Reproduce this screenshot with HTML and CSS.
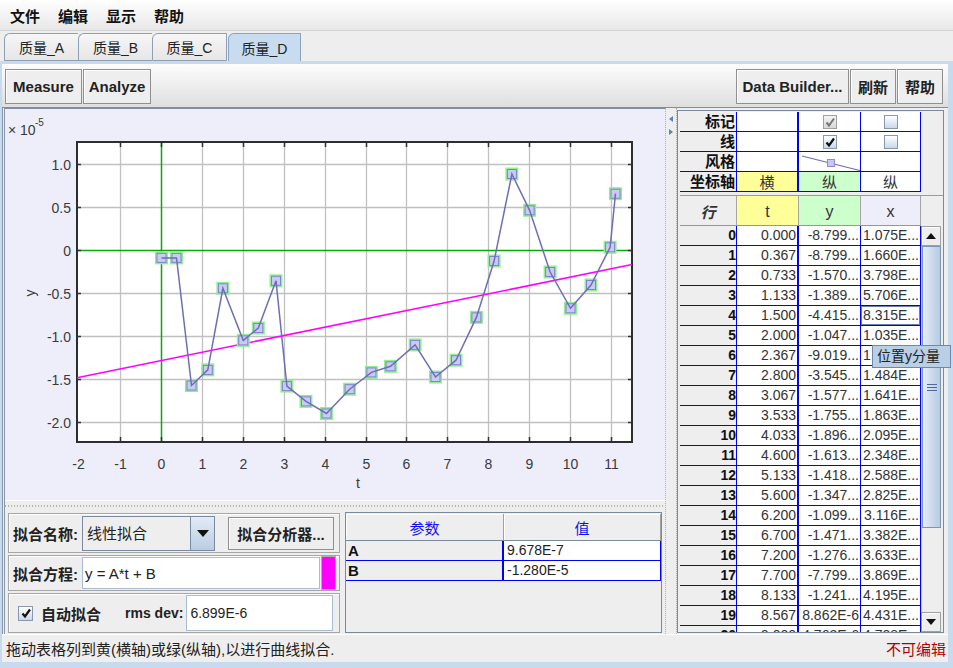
FILE: index.html
```html
<!DOCTYPE html>
<html>
<head>
<meta charset="utf-8">
<link rel="stylesheet" href="styles.css">
</head>
<body>
<div class="menubar"><span>文件</span><span>编辑</span><span>显示</span><span>帮助</span></div>
<div class="tabstrip">
  <div class="tab">质量_A</div>
  <div class="tab">质量_B</div>
  <div class="tab wide">质量_C</div>
  <div class="tab sel">质量_D</div>
</div>
<div class="frame">
  <div class="inner">
    <div class="toolbar">
      <button class="btn w-measure">Measure</button>
      <button class="btn w-analyze">Analyze</button>
      <div class="spacer"></div>
      <button class="btn w-builder">Data Builder...</button>
      <button class="btn w-small">刷新</button>
      <button class="btn w-small">帮助</button>
    </div>
    <div class="main">
      <div class="leftcol">
        <div class="chart">
          <svg class="plot" width="660" height="391" viewBox="0 0 660 391">
            <defs>
              <g id="mk">
                <rect x="-6.5" y="-6.5" width="13" height="13" fill="#8fef8f"/>
                <rect x="-4.5" y="-4.5" width="9" height="9" fill="#cacaf6" stroke="#8282d2" stroke-width="1"/>
              </g>
            </defs>
            <rect x="72" y="33" width="555" height="300" fill="#ffffff"/>
            <path d="M115.5 33V333M197.5 33V333M238.5 33V333M279.5 33V333M320.5 33V333M361.5 33V333M401.5 33V333M442.5 33V333M483.5 33V333M524.5 33V333M565.5 33V333M606.5 33V333M72 55.5H627M72 98.5H627M72 184.5H627M72 227.5H627M72 270.5H627M72 313.5H627" stroke="#c0c0c0" stroke-width="1.3" fill="none"/>
            <path d="M156.5 33V333M72 141.5H627" stroke="#0aa80a" stroke-width="1.5" fill="none"/>
            <path d="M115.5 333v-5M156.5 333v-5M197.5 333v-5M238.5 333v-5M279.5 333v-5M320.5 333v-5M361.5 333v-5M401.5 333v-5M442.5 333v-5M483.5 333v-5M524.5 333v-5M565.5 333v-5M606.5 333v-5M115.5 33v5M156.5 33v5M197.5 33v5M238.5 33v5M279.5 33v5M320.5 33v5M361.5 33v5M401.5 33v5M442.5 33v5M483.5 33v5M524.5 33v5M565.5 33v5M606.5 33v5M72 55.5h4M72 98.5h4M72 141.5h4M72 184.5h4M72 227.5h4M72 270.5h4M72 313.5h4M627 55.5h-4M627 98.5h-4M627 141.5h-4M627 184.5h-4M627 227.5h-4M627 270.5h-4M627 313.5h-4" stroke="#333" stroke-width="1.5" fill="none"/>
            <rect x="72" y="33" width="555" height="300" fill="none" stroke="#2d2d2d" stroke-width="2"/>
            <line x1="72" y1="268.7" x2="627" y2="155.6" stroke="#ff00ff" stroke-width="1.5"/>
            <use href="#mk" x="156.5" y="148.9"/><use href="#mk" x="171.5" y="148.9"/><use href="#mk" x="186.5" y="276.5"/><use href="#mk" x="202.8" y="260.9"/><use href="#mk" x="217.9" y="179.3"/><use href="#mk" x="238.3" y="231.4"/><use href="#mk" x="253.3" y="219"/><use href="#mk" x="271" y="171.8"/><use href="#mk" x="281.9" y="277.1"/><use href="#mk" x="301" y="292.4"/><use href="#mk" x="321.5" y="304.5"/><use href="#mk" x="344.6" y="280.2"/><use href="#mk" x="366.4" y="263.4"/><use href="#mk" x="385.5" y="257.3"/><use href="#mk" x="410.1" y="235.9"/><use href="#mk" x="430.5" y="268"/><use href="#mk" x="451" y="251.2"/><use href="#mk" x="471.4" y="208.4"/><use href="#mk" x="489.1" y="152"/><use href="#mk" x="506.9" y="65"/><use href="#mk" x="524.6" y="101.3"/><use href="#mk" x="545.1" y="163"/><use href="#mk" x="565.5" y="199.3"/><use href="#mk" x="586" y="176"/><use href="#mk" x="605.1" y="138.3"/><use href="#mk" x="610.5" y="84.7"/>
            <polyline points="156.5,148.9 171.5,148.9 186.5,276.5 202.8,260.9 217.9,179.3 238.3,231.4 253.3,219 271,171.8 281.9,277.1 301,292.4 321.5,304.5 344.6,280.2 366.4,263.4 385.5,257.3 410.1,235.9 430.5,268 451,251.2 471.4,208.4 489.1,152 506.9,65 524.6,101.3 545.1,163 565.5,199.3 586,176 605.1,138.3 610.5,84.7" fill="none" stroke="#6e6eb4" stroke-width="1.5"/>
            <g class="ylab">
              <text x="66" y="61">1.0</text><text x="66" y="104">0.5</text><text x="66" y="147">0</text><text x="66" y="190">-0.5</text><text x="66" y="233">-1.0</text><text x="66" y="276">-1.5</text><text x="66" y="319">-2.0</text>
            </g>
            <g class="xlab">
              <text x="73.5" y="360">-2</text><text x="115.5" y="360">-1</text><text x="156.5" y="360">0</text><text x="197.5" y="360">1</text><text x="238.5" y="360">2</text><text x="279.5" y="360">3</text><text x="320.5" y="360">4</text><text x="361.5" y="360">5</text><text x="401.5" y="360">6</text><text x="442.5" y="360">7</text><text x="483.5" y="360">8</text><text x="524.5" y="360">9</text><text x="565.5" y="360">10</text><text x="606.5" y="360">11</text>
            </g>
            <text class="axname" x="351" y="379">t</text>
            <text class="axname" x="0" y="0" transform="translate(30 184) rotate(-90)" text-anchor="middle">y</text>
            <text class="axname" x="3" y="26">×</text>
            <text class="axname" x="15" y="26">10</text>
            <text class="sup" x="30" y="17">-5</text>
          </svg>
        </div>
        <div class="hsplit"></div>
        <div class="bottom">
          <div class="fitpanel">
            <div class="fitrow r1">
              <span class="lbl">拟合名称:</span>
              <div class="combo"><div class="combo-field">线性拟合</div><div class="combo-btn"><svg width="12" height="7" viewBox="0 0 12 7"><path d="M0 0H12L6 7Z" fill="#111"/></svg></div></div>
              <button class="btn w-fitan">拟合分析器...</button>
            </div>
            <div class="fitrow r2">
              <span class="lbl">拟合方程:</span>
              <div class="tf eq">y = A*t + B</div>
              <div class="swatch"></div>
            </div>
            <div class="fitrow r3">
              <span class="cb on big"><svg width="12" height="12" viewBox="0 0 12 12"><path d="M2.5 6.5L5 9.5L10 2.5" stroke="#111" stroke-width="2.2" fill="none"/></svg></span>
              <span class="lbl auto">自动拟合</span>
              <span class="lbl rms">rms dev:</span>
              <div class="tf rmsv">6.899E-6</div>
            </div>
          </div>
          <div class="params">
            <div class="phead"><div>参数</div><div>值</div></div>
            <div class="prow"><div class="pk">A</div><div class="pv">9.678E-7</div></div>
            <div class="prow"><div class="pk">B</div><div class="pv">-1.280E-5</div></div>
          </div>
        </div>
      </div>
      <div class="vsplit">
        <svg width="6" height="24" viewBox="0 0 6 24" class="arrows"><path d="M5 3L1 6L5 9Z" fill="#5f7fb5"/><path d="M1 16L5 19L1 22Z" fill="#5f7fb5"/></svg>
      </div>
      <div class="rightcol">
        <div class="tablebox">
          <div class="props">
            <div class="plabel">标记</div><div class="pc"></div><div class="pc"><span class="cb on dis"><svg width="12" height="12" viewBox="0 0 12 12"><path d="M2.5 6.5L5 9.5L10 2.5" stroke="#777" stroke-width="2" fill="none"/></svg></span></div><div class="pc"><span class="cb"></span></div>
            <div class="plabel">线</div><div class="pc"></div><div class="pc"><span class="cb on"><svg width="12" height="12" viewBox="0 0 12 12"><path d="M2.5 6.5L5 9.5L10 2.5" stroke="#111" stroke-width="2.2" fill="none"/></svg></span></div><div class="pc"><span class="cb"></span></div>
            <div class="plabel">风格</div><div class="pc"></div><div class="pc"><svg width="61" height="19" viewBox="0 0 61 19"><line x1="3" y1="4" x2="61" y2="18.5" stroke="#7070b4" stroke-width="1.2"/><rect x="28.5" y="7.5" width="7" height="7" fill="#c8c8f6" stroke="#8a8ad6"/></svg></div><div class="pc"></div>
            <div class="plabel">坐标轴</div><div class="pc yel">横</div><div class="pc grn">纵</div><div class="pc">纵</div>
          </div>
          <div class="datasec">
            <div class="dtable">
              <div class="dhead"><div class="h0">行</div><div class="ht">t</div><div class="hy">y</div><div class="hx">x</div></div>
              <div class="dbody">
                <div class="drow"><div class="rh">0</div><div class="c">0.000</div><div class="c">-8.799...</div><div class="c">1.075E...</div></div>
                <div class="drow"><div class="rh">1</div><div class="c">0.367</div><div class="c">-8.799...</div><div class="c">1.660E...</div></div>
                <div class="drow"><div class="rh">2</div><div class="c">0.733</div><div class="c">-1.570...</div><div class="c">3.798E...</div></div>
                <div class="drow"><div class="rh">3</div><div class="c">1.133</div><div class="c">-1.389...</div><div class="c">5.706E...</div></div>
                <div class="drow"><div class="rh">4</div><div class="c">1.500</div><div class="c">-4.415...</div><div class="c focus">8.315E...</div></div>
                <div class="drow"><div class="rh">5</div><div class="c">2.000</div><div class="c">-1.047...</div><div class="c">1.035E...</div></div>
                <div class="drow"><div class="rh">6</div><div class="c">2.367</div><div class="c">-9.019...</div><div class="c">1.262E...</div></div>
                <div class="drow"><div class="rh">7</div><div class="c">2.800</div><div class="c">-3.545...</div><div class="c">1.484E...</div></div>
                <div class="drow"><div class="rh">8</div><div class="c">3.067</div><div class="c">-1.577...</div><div class="c">1.641E...</div></div>
                <div class="drow"><div class="rh">9</div><div class="c">3.533</div><div class="c">-1.755...</div><div class="c">1.863E...</div></div>
                <div class="drow"><div class="rh">10</div><div class="c">4.033</div><div class="c">-1.896...</div><div class="c">2.095E...</div></div>
                <div class="drow"><div class="rh">11</div><div class="c">4.600</div><div class="c">-1.613...</div><div class="c">2.348E...</div></div>
                <div class="drow"><div class="rh">12</div><div class="c">5.133</div><div class="c">-1.418...</div><div class="c">2.588E...</div></div>
                <div class="drow"><div class="rh">13</div><div class="c">5.600</div><div class="c">-1.347...</div><div class="c">2.825E...</div></div>
                <div class="drow"><div class="rh">14</div><div class="c">6.200</div><div class="c">-1.099...</div><div class="c">3.116E...</div></div>
                <div class="drow"><div class="rh">15</div><div class="c">6.700</div><div class="c">-1.471...</div><div class="c">3.382E...</div></div>
                <div class="drow"><div class="rh">16</div><div class="c">7.200</div><div class="c">-1.276...</div><div class="c">3.633E...</div></div>
                <div class="drow"><div class="rh">17</div><div class="c">7.700</div><div class="c">-7.799...</div><div class="c">3.869E...</div></div>
                <div class="drow"><div class="rh">18</div><div class="c">8.133</div><div class="c">-1.241...</div><div class="c">4.195E...</div></div>
                <div class="drow"><div class="rh">19</div><div class="c">8.567</div><div class="c">8.862E-6</div><div class="c">4.431E...</div></div>
                <div class="drow"><div class="rh">20</div><div class="c">9.000</div><div class="c">4.763E-6</div><div class="c">4.708E...</div></div>
              </div>
            </div>
            <div class="vscroll">
              <div class="sb-top"></div>
              <div class="sb-btn"><svg width="10" height="6" viewBox="0 0 10 6"><path d="M0 6L5 0L10 6Z" fill="#111"/></svg></div>
              <div class="sb-track">
                <div class="sb-thumb"><svg width="10" height="7" viewBox="0 0 10 7"><path d="M0 0.5H10M0 3.5H10M0 6.5H10" stroke="#4a6a9c" stroke-width="1"/></svg></div>
              </div>
              <div class="sb-btn"><svg width="10" height="6" viewBox="0 0 10 6"><path d="M0 0L5 6L10 0Z" fill="#111"/></svg></div>
            </div>
          </div>
        </div>
      </div>
    </div>
    <div class="status"><span>拖动表格列到黄(横轴)或绿(纵轴),以进行曲线拟合.</span><span class="ro">不可编辑</span></div>
  </div>
</div>
<div class="tooltip">位置y分量</div>
</body>
</html>
```

FILE: styles.css
```css
* { box-sizing: border-box; }
body {
  margin: 0;
  width: 953px;
  height: 668px;
  overflow: hidden;
  position: relative;
  background: #eeeeee;
  font-family: "Liberation Sans", "Noto Sans CJK SC", sans-serif;
  font-size: 14px;
  color: #222;
}
button { font-family: inherit; margin: 0; padding: 0; color: #222; }

.menubar {
  height: 31px;
  display: flex;
  align-items: center;
  gap: 18px;
  padding-left: 10px;
  background: linear-gradient(#ffffff, #e7e7e7);
  border-bottom: 1px solid #d2d2d2;
  font-size: 15px;
  font-weight: bold;
  color: #111;
}

.tabstrip {
  height: 30px;
  display: flex;
  align-items: flex-end;
  padding-left: 4px;
}
.tab {
  width: 74px;
  height: 28px;
  display: flex;
  align-items: center;
  justify-content: center;
  border: 1px solid #8f9fb3;
  border-right: none;
  border-top-left-radius: 6px;
  background: linear-gradient(#f6f6f6, #e6e6e6);
  font-size: 14px;
  color: #222;
}
.tab.wide { width: 75px; border-right: 1px solid #8f9fb3; }
.tab.sel {
  width: 73px;
  margin-left: 1px;
  background: #c8dcf0;
  border: 1px solid #8aa2bf;
  border-bottom: none;
}

.frame {
  height: 607px;
  background: #c7daee;
  padding: 3px 5px 6px 2px;
}
.inner {
  height: 598px;
  display: flex;
  flex-direction: column;
  background: #eeeeee;
}

.toolbar {
  height: 44px;
  flex: none;
  display: flex;
  align-items: flex-start;
  gap: 1px;
  padding: 5px 5px 0 3px;
  background: linear-gradient(#fdfdfd, #dedede);
  border-bottom: 1px solid #7d8ea0;
}
.spacer { flex: 1; }
.btn {
  height: 35px;
  border: 1px solid #8f8f8f;
  background: #eeeeee;
  box-shadow: inset 1px 1px 0 #ffffff;
  font-size: 15px;
  font-weight: bold;
}
.w-measure { width: 77px; }
.w-analyze { width: 68px; }
.w-builder { width: 113px; }
.w-small { width: 46px; }

.main {
  height: 526px;
  display: flex;
}
.leftcol {
  width: 663px;
  display: flex;
  flex-direction: column;
  border-left: 3px double #8797a9;
}
.chart {
  height: 392px;
  border-top: 1px solid #7d8ea0;
  background: #eeeefb;
}
.plot { display: block; }
.plot text {
  font-family: "Liberation Sans", sans-serif;
  font-size: 14px;
  fill: #3a3a3a;
}
.plot .ylab text { text-anchor: end; }
.plot .xlab text { text-anchor: middle; }
.plot .sup { font-size: 10px; }

.hsplit {
  height: 10px;
  background-color: #eeeeee;
  background-image: repeating-linear-gradient(90deg, #b4b4b4 0 1px, transparent 1px 3px);
  background-size: 100% 2px;
  background-position: 0 4px;
  background-repeat: no-repeat;
  border-top: 1px solid #ffffff;
}
.bottom {
  height: 124px;
  display: flex;
  gap: 5px;
  padding: 2px 0 0 3px;
}
.fitpanel {
  width: 332px;
  margin-top: 1px;
  display: flex;
  flex-direction: column;
  gap: 2px;
}
.fitrow {
  display: flex;
  align-items: center;
  border: 1px solid #a6a6a6;
  box-shadow: inset 1px 1px 0 #ffffff;
}
.r1 { height: 40px; padding-left: 4px; }
.r2 { height: 36px; padding-left: 4px; }
.r3 { height: 40px; padding-left: 9px; }
.lbl {
  font-size: 15px;
  font-weight: bold;
  color: #222;
  white-space: nowrap;
}
.r1 .lbl, .r2 .lbl { width: 69px; }
.combo {
  width: 133px;
  height: 35px;
  display: flex;
  border: 1px solid #7a8ba0;
}
.combo-field {
  flex: 1;
  background: #eeeeee;
  font-size: 15px;
  padding: 5px 0 0 4px;
  border-right: 1px solid #7a8ba0;
}
.combo-btn {
  width: 23px;
  display: flex;
  align-items: center;
  justify-content: center;
  background: linear-gradient(#e2ebf5, #b9cde3);
}
.w-fitan {
  width: 106px;
  height: 33px;
  margin-left: 13px;
  font-size: 15px;
}
.tf {
  background: #ffffff;
  border: 1px solid #a9bcd2;
  display: flex;
  align-items: center;
  padding-left: 2px;
  font-size: 15px;
  color: #222;
}
.eq { width: 238px; height: 32px; }
.swatch {
  width: 15px;
  height: 34px;
  margin-left: 1px;
  background: #ff00ff;
  border: 1px solid #b0b0b0;
  box-shadow: inset 0 0 0 1px #ff00ff;
}
.cb {
  display: inline-flex;
  align-items: center;
  justify-content: center;
  width: 14px;
  height: 14px;
  border: 1px solid #8797ad;
  background: linear-gradient(#ffffff, #c9d8ea);
}
.cb.dis { background: linear-gradient(#f4f4f4, #d8d8d8); border-color: #a0a0a0; }
.cb.big { width: 15px; height: 15px; }
.auto { margin-left: 8px; }
.rms { margin-left: 24px; font-size: 14px; }
.rmsv { width: 147px; height: 36px; margin-left: 3px; font-size: 14px; padding-left: 3px; }

.params {
  width: 317px;
  height: 121px;
  border: 1px solid #7a8a9c;
  padding-top: 1px;
  background: #eeeeee;
}
.phead {
  display: grid;
  grid-template-columns: 158px 157px;
  height: 27px;
  border-bottom: 1px solid #7a8a9c;
}
.phead div {
  display: flex;
  align-items: center;
  justify-content: center;
  color: #1010f0;
  font-size: 15px;
  border-right: 1px solid #a0a0a0;
  box-shadow: inset 1px 1px 0 #ffffff;
}
.prow {
  display: grid;
  grid-template-columns: 158px 157px;
  height: 20px;
}
.pk, .pv {
  border-bottom: 1px solid #0000ff;
  line-height: 19px;
  font-size: 15px;
}
.pk { font-weight: bold; color: #111; padding-left: 2px; border-right: 2px solid #0000ff; }
.pv { background: #ffffff; padding-left: 3px; border-right: 1px solid #0000ff; font-size: 14px; }

.vsplit {
  width: 12px;
  background: #eeeeee;
  border-left: 1px dotted #b0b0b0;
  border-right: 1px dotted #b0b0b0;
  padding: 5px 0 0 2px;
}
.arrows { display: block; }

.rightcol {
  width: 271px;
  padding: 2px 4px 1px 0;
}
.tablebox {
  height: 523px;
  border: 1px solid #7a8a9c;
  background: #eeeeee;
  padding: 1px 0 0 2px;
  overflow: hidden;
}
.props {
  display: grid;
  grid-template-columns: 57px 62px 62px 60px;
  grid-auto-rows: 20px;
  width: 241px;
}
.props > div {
  border-right: 1px solid #0000ff;
  border-bottom: 1px solid #0000ff;
}
.props > div:nth-child(4n+2) { border-right-width: 2px; }
.plabel {
  background: #eeeeee;
  text-align: right;
  font-size: 15px;
  font-weight: bold;
  line-height: 19px;
  color: #111;
  padding-right: 1px;
}
.pc {
  background: #ffffff;
  display: flex;
  align-items: center;
  justify-content: center;
  font-size: 15px;
  color: #333;
}
.pc svg { display: block; }
.pc.yel { background: #ffff99; }
.pc.grn { background: #ccffcc; }

.datasec {
  margin-top: 3px;
  border-top: 1px solid #9a9a9a;
  display: flex;
  height: 437px;
}
.dtable { width: 241px; }
.dhead {
  display: grid;
  grid-template-columns: 57px 62px 62px 60px;
  height: 30px;
}
.dhead div {
  display: flex;
  align-items: center;
  justify-content: center;
  font-size: 16px;
  color: #333;
  border-right: 1px solid #a4a4a4;
  border-bottom: 1px solid #8a98a8;
  padding-top: 2px;
}
.dhead .h0 { background: #eeeeee; font-weight: bold; font-style: italic; font-size: 15px; }
.dhead .ht { background: #ffff99; }
.dhead .hy { background: #ccffcc; }
.dhead .hx { background: #eeeefa; }
.dbody { height: 406px; overflow: hidden; }
.drow {
  display: grid;
  grid-template-columns: 57px 62px 62px 60px;
  height: 20px;
}
.drow > div {
  border-right: 1px solid #0000ff;
  border-bottom: 1px solid #0000ff;
  line-height: 19px;
  text-align: right;
  white-space: nowrap;
  overflow: hidden;
  font-size: 14px;
  color: #333;
  padding-right: 1px;
}
.drow > div:nth-child(2) { border-right-width: 2px; }
.drow .rh { background: #eeeeee; font-weight: bold; color: #111; padding-right: 0; }
.drow .c { background: #ffffff; }
.drow .c.focus { box-shadow: inset 0 0 0 1px #6a7fb0; }

.vscroll {
  width: 20px;
  display: flex;
  flex-direction: column;
}
.sb-top { height: 30px; }
.sb-btn {
  height: 20px;
  display: flex;
  align-items: center;
  justify-content: center;
  background: #eeeeee;
  border: 1px solid #a0a0a0;
  box-shadow: inset 1px 1px 0 #ffffff;
}
.sb-track {
  flex: 1;
  background: #eeeeee;
  border-left: 1px solid #c8c8c8;
}
.sb-thumb {
  height: 282px;
  border: 1px solid #7d95b5;
  background: linear-gradient(90deg, #e4edf7, #b6cbe3);
  display: flex;
  align-items: center;
  justify-content: center;
}

.status {
  flex: 1;
  display: flex;
  align-items: center;
  justify-content: space-between;
  padding: 0 2px 0 4px;
  font-size: 15px;
  color: #222;
  border-top: 1px solid #ffffff;
}
.status .ro { color: #b00000; }

.tooltip {
  position: absolute;
  left: 872px;
  top: 345px;
  width: 79px;
  height: 23px;
  background: #b8cfe5;
  border: 1px solid #6b88ad;
  font-size: 14px;
  color: #222;
  line-height: 21px;
  padding-left: 4px;
}
```
